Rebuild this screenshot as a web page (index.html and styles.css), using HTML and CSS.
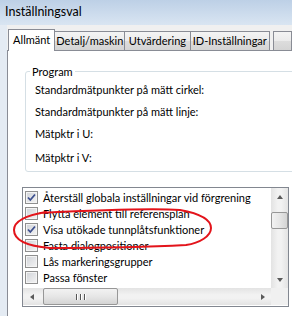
FILE: index.html
```html
<!DOCTYPE html>
<html lang="sv">
<head>
    <meta charset="UTF-8">
    <title>Inställningsval</title>
    <link rel="stylesheet" href="styles.css">
</head>
<body>
    <div class="window">
        <div class="titlebar">Inställningsval</div>
        <div class="frame">
            <div class="tabs">
                <div class="tab active">Allmänt</div>
                <div class="tab tab-detail">Detalj/maskin</div>
                <div class="tab tab-eval">Utvärdering</div>
                <div class="tab tab-id">ID-Inställningar</div>
                <div class="tab tab-more"></div>
            </div>
            <div class="panel">
                <fieldset class="group">
                    <legend>Program</legend>
                    <p>Standardmätpunkter på mätt cirkel:</p>
                    <p>Standardmätpunkter på mätt linje:</p>
                    <p>Mätpktr i U:</p>
                    <p class="last">Mätpktr i V:</p>
                </fieldset>
                <div class="listbox">
                    <div class="list-body">
                        <ul class="items">
                            <li><span class="cb checked"><svg width="11" height="11" viewBox="0 0 11 11"><path d="M2 5.5 L4.3 8 L9 2.5" fill="none" stroke="#3c4f8e" stroke-width="1.8"/></svg></span>Återställ globala inställningar vid förgrening</li>
                            <li><span class="cb"></span>Flytta element till referensplan</li>
                            <li><span class="cb checked"><svg width="11" height="11" viewBox="0 0 11 11"><path d="M2 5.5 L4.3 8 L9 2.5" fill="none" stroke="#3c4f8e" stroke-width="1.8"/></svg></span>Visa utökade tunnplåtsfunktioner</li>
                            <li><span class="cb"></span>Fasta dialogpositioner</li>
                            <li><span class="cb"></span>Lås markeringsgrupper</li>
                            <li><span class="cb"></span>Passa fönster</li>
                        </ul>
                        <div class="vscroll">
                            <div class="sb-btn"><span class="arrow up"></span></div>
                            <div class="vtrack">
                                <div class="vthumb"></div>
                            </div>
                            <div class="sb-btn"><span class="arrow down"></span></div>
                        </div>
                    </div>
                    <div class="hscroll">
                        <div class="sb-btn"><span class="arrow left"></span></div>
                        <div class="htrack">
                            <div class="hthumb"><span class="grip"></span><span class="grip"></span><span class="grip"></span></div>
                        </div>
                        <div class="sb-btn"><span class="arrow right"></span></div>
                        <div class="corner"></div>
                    </div>
                </div>
            </div>
        </div>
        <!-- hand drawn red circle around the highlighted option -->
        <svg class="marker" width="292" height="316" viewBox="0 0 292 316">
            <path d="M46 212 C28 215 14 220 14 230 C14 240 26 246 50 248 C100 248 150 247 186 245 C200 243 211 236 211 228 C211 220 202 214 180 210 C150 208 100 210 40 213" fill="none" stroke="#e3141b" stroke-width="2" stroke-linecap="round"/>
        </svg>
    </div>
</body>
</html>
```

FILE: styles.css
```css
body {
    margin: 0;
    font-family: "Segoe UI", Lato, "Noto Sans", Arial, sans-serif;
    font-size: 11px;
    color: #000;
}
.window {
    position: relative;
    width: 292px;
    height: 316px;
    overflow: hidden;
    background: #e4ebf3;
}
.titlebar {
    height: 25px;
    line-height: 24px;
    padding-left: 5px;
    font-size: 12.5px;
    background: linear-gradient(#bdd0e6, #d9e5f2);
}
.frame {
    margin-left: 7px;
    height: 291px;
    background: #f0f0f0;
    display: flex;
    flex-direction: column;
}
.tabs {
    display: flex;
    align-items: flex-end;
    height: 25px;
    padding-left: 1px;
}
.tab {
    box-sizing: border-box;
    height: 19px;
    line-height: 17px;
    text-align: center;
    border: 1px solid #898c95;
    border-bottom: none;
    margin-left: -1px;
    background: linear-gradient(#f4f4f4, #ebebeb 50%, #dddddd 50%, #d4d4d4);
    white-space: nowrap;
    overflow: hidden;
}
.tab.active {
    height: 22px;
    width: 50px;
    margin-left: 0;
    margin-bottom: -1px;
    line-height: 20px;
    background: #fff;
    position: relative;
    z-index: 1;
}
.tab-detail {
    width: 75px;
}
.tab-eval {
    width: 70px;
}
.tab-id {
    width: 85px;
}
.tab-more {
    width: 20px;
    margin-left: 3px;
}
.panel {
    flex: 1;
    background: #fff;
    border-left: 1px solid #898c95;
    border-top: 1px solid #898c95;
    padding-left: 17px;
    padding-top: 13px;
}
.group {
    box-sizing: border-box;
    width: 300px;
    margin: 0;
    padding: 0 0 2px 4px;
    border: 1px solid #d5dfe5;
    border-radius: 3px;
}
.group legend {
    padding: 0 2px;
    line-height: 15px;
}
.group p {
    margin: 0 0 0 5px;
    line-height: 22px;
}
.group p.last {
    margin-top: 2px;
}
.listbox {
    box-sizing: border-box;
    width: 267px;
    height: 120px;
    margin: 15px 0 0 -3px;
    border: 1px solid #828790;
    display: flex;
    flex-direction: column;
}
.list-body {
    display: flex;
    height: 100px;
}
.items {
    flex: 1;
    margin: 0;
    padding: 1px 0 0 2px;
    list-style: none;
    overflow: hidden;
}
.items li {
    display: flex;
    align-items: center;
    height: 16px;
    white-space: nowrap;
}
.cb {
    box-sizing: border-box;
    flex: none;
    width: 13px;
    height: 13px;
    margin-right: 5px;
    border: 1px solid #8f8f8f;
    background: linear-gradient(135deg, #d0d3d8, #f4f4f4);
    box-shadow: inset 0 0 0 1px #f4f4f4;
    display: flex;
    align-items: center;
    justify-content: center;
}
.cb svg {
    display: block;
}
.vscroll {
    width: 17px;
    display: flex;
    flex-direction: column;
    background: linear-gradient(90deg, #e3e3e3, #f2f2f2 40%, #f2f2f2 60%, #e3e3e3);
}
.vtrack {
    flex: 1;
    padding-top: 7px;
}
.vthumb {
    box-sizing: border-box;
    width: 17px;
    height: 17px;
    border: 1px solid #979797;
    border-radius: 2px;
    background: linear-gradient(90deg, #f2f2f2, #e6e6e6 50%, #d4d4d4);
}
.sb-btn {
    width: 17px;
    height: 17px;
    flex: none;
    display: flex;
    align-items: center;
    justify-content: center;
}
.arrow {
    width: 0;
    height: 0;
    border: 3px solid transparent;
}
.arrow.up {
    border-bottom: 4px solid #5a5a5a;
    border-top-width: 0;
}
.arrow.down {
    border-top: 4px solid #5a5a5a;
    border-bottom-width: 0;
}
.arrow.left {
    border-right: 4px solid #5a5a5a;
    border-left-width: 0;
}
.arrow.right {
    border-left: 4px solid #5a5a5a;
    border-right-width: 0;
}
.hscroll {
    display: flex;
    height: 17px;
    background: linear-gradient(#e3e3e3, #f2f2f2 40%, #f2f2f2 60%, #e3e3e3);
}
.htrack {
    flex: 1;
    padding-left: 3px;
}
.hthumb {
    box-sizing: border-box;
    width: 75px;
    height: 17px;
    border: 1px solid #979797;
    border-radius: 2px;
    background: linear-gradient(#f2f2f2, #e6e6e6 50%, #d4d4d4);
    display: flex;
    align-items: center;
    justify-content: center;
    gap: 1px;
}
.grip {
    width: 1px;
    height: 6px;
    background: #555;
    box-shadow: 1px 0 0 #fff;
    margin: 0 1px;
}
.corner {
    width: 17px;
    background: #f0f0f0;
}
.marker {
    position: absolute;
    top: 0;
    left: 0;
    pointer-events: none;
}
```
